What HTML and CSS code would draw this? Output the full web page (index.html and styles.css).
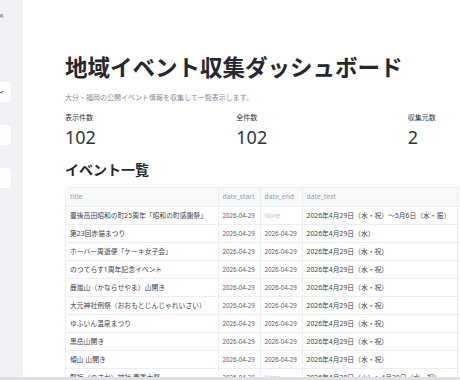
FILE: index.html
```html
<!DOCTYPE html>
<html lang="ja">
  <head>
    <meta charset="UTF-8" />
    <meta name="viewport" content="width=device-width, initial-scale=1.0" />
    <title>地域イベント収集ダッシュボード</title>
    <link rel="stylesheet" href="styles.css">
  </head>

  <body>
    <!-- sidebar, mostly scrolled out of view -->
    <aside class="sidebar">
      <div class="sidebar-inner">
        <div class="sidebar-top"><span class="close">×</span></div>
        <div class="select">
          <svg class="chevron" width="6" height="6" viewBox="0 0 6 6">
            <path d="M0.8 2 L3 4.2 L5.2 2" fill="none" stroke="#31333f" stroke-width="0.9" />
          </svg>
        </div>
        <div class="select"></div>
        <div class="select"></div>
      </div>
    </aside>

    <main class="main">
      <div class="block">
        <h1>地域イベント収集ダッシュボード</h1>
        <p class="caption">大分・福岡の公開イベント情報を収集して一覧表示します。</p>

        <div class="metrics">
          <div class="metric">
            <div class="metric-label">表示件数</div>
            <div class="metric-value">102</div>
          </div>
          <div class="metric">
            <div class="metric-label">全件数</div>
            <div class="metric-value">102</div>
          </div>
          <div class="metric">
            <div class="metric-label">収集元数</div>
            <div class="metric-value">2</div>
          </div>
        </div>

        <h3>イベント一覧</h3>

        <div class="grid">
          <table>
            <colgroup>
              <col class="c-title" />
              <col class="c-date" />
              <col class="c-date" />
              <col class="c-text" />
              <col />
            </colgroup>
            <thead>
              <tr>
                <th>title</th>
                <th>date_start</th>
                <th>date_end</th>
                <th>date_text</th>
                <th>place</th>
              </tr>
            </thead>
            <tbody>
              <tr>
                <td>豊後高田昭和の町25周年「昭和の町感謝祭」</td>
                <td class="date">2026-04-29</td>
                <td class="none">None</td>
                <td>2026年4月29日（水・祝）～5月6日（水・振）</td>
                <td></td>
              </tr>
              <tr>
                <td>第23回赤猫まつり</td>
                <td class="date">2026-04-29</td>
                <td class="date">2026-04-29</td>
                <td>2026年4月29日（水）</td>
                <td></td>
              </tr>
              <tr>
                <td>ホーバー周遊便「ケーキ女子会」</td>
                <td class="date">2026-04-29</td>
                <td class="date">2026-04-29</td>
                <td>2026年4月29日（水・祝）</td>
                <td></td>
              </tr>
              <tr>
                <td>のつてらす1周年記念イベント</td>
                <td class="date">2026-04-29</td>
                <td class="date">2026-04-29</td>
                <td>2026年4月29日（水・祝）</td>
                <td></td>
              </tr>
              <tr>
                <td>鹿嵐山（かならせやま）山開き</td>
                <td class="date">2026-04-29</td>
                <td class="date">2026-04-29</td>
                <td>2026年4月29日（水・祝）</td>
                <td></td>
              </tr>
              <tr>
                <td>大元神社例祭（おおもとじんじゃれいさい）</td>
                <td class="date">2026-04-29</td>
                <td class="date">2026-04-29</td>
                <td>2026年4月29日（水・祝）</td>
                <td></td>
              </tr>
              <tr>
                <td>ゆふいん温泉まつり</td>
                <td class="date">2026-04-29</td>
                <td class="date">2026-04-29</td>
                <td>2026年4月29日（水・祝）</td>
                <td></td>
              </tr>
              <tr>
                <td>黒岳山開き</td>
                <td class="date">2026-04-29</td>
                <td class="date">2026-04-29</td>
                <td>2026年4月29日（水・祝）</td>
                <td></td>
              </tr>
              <tr>
                <td>傾山 山開き</td>
                <td class="date">2026-04-29</td>
                <td class="date">2026-04-29</td>
                <td>2026年4月29日（水・祝）</td>
                <td></td>
              </tr>
              <tr>
                <td>野坂（のさか）神社 春季大祭</td>
                <td class="date">2026-04-28</td>
                <td class="none">None</td>
                <td>2026年4月28日（火）～4月29日（水・祝）</td>
                <td></td>
              </tr>
            </tbody>
          </table>
        </div>
      </div>
    </main>

    <div class="hscroll"></div>
  </body>
</html>
```

FILE: styles.css
```css
* {
  margin: 0;
  padding: 0;
  box-sizing: border-box;
}

body {
  width: 460px;
  height: 380px;
  overflow: hidden;
  display: flex;
  background-color: #ffffff;
  color: #31333f;
  font-family: "Noto Sans", "Noto Sans CJK JP", sans-serif;
}

/* sidebar */

.sidebar {
  width: 23px;
  flex-shrink: 0;
  background-color: #f0f2f6;
  overflow: hidden;
}

.sidebar-inner {
  width: 140px;
  margin-left: -129px;
  display: flex;
  flex-direction: column;
  gap: 23px;
}

.sidebar-top {
  height: 60px;
  display: flex;
  justify-content: flex-end;
  padding-top: 11px;
  margin-right: 7px;
  margin-bottom: -1px;
}

.close {
  font-size: 9px;
  line-height: 10px;
  color: #6b6e78;
}

.select {
  height: 20px;
  background-color: #ffffff;
  border-radius: 4px;
  display: flex;
  align-items: center;
  justify-content: flex-end;
  padding-right: 7px;
}

/* main */

.main {
  flex-shrink: 0;
  padding: 54px 0 0 42px;
}

.block {
  width: 506px;
  display: flex;
  flex-direction: column;
}

h1 {
  font-size: 22.5px;
  font-weight: 700;
  line-height: 27px;
  color: #262730;
}

.caption {
  margin-top: 12px;
  font-size: 7px;
  line-height: 10px;
  color: #8a8c96;
}

.metrics {
  margin-top: 10px;
  display: flex;
  gap: 8px;
}

.metric {
  flex: 1;
}

.metric-label {
  font-size: 7px;
  line-height: 10px;
  color: #31333f;
}

.metric-value {
  margin-top: 3px;
  font-size: 18px;
  line-height: 23px;
  color: #31333f;
}

h3 {
  margin-top: 11px;
  font-size: 14px;
  font-weight: 700;
  line-height: 20px;
  color: #262730;
}

/* data grid */

.grid {
  margin-top: 7px;
  border: 1px solid #eceef2;
  border-radius: 4px;
  overflow: hidden;
}

table {
  width: 100%;
  border-collapse: collapse;
  table-layout: fixed;
}

.c-title {
  width: 152px;
}

.c-date {
  width: 42px;
}

.c-text {
  width: 155px;
}

th,
td {
  height: 18px;
  padding: 0 4px;
  font-size: 6.8px;
  font-weight: 400;
  text-align: left;
  white-space: nowrap;
  overflow: hidden;
  border-right: 1px solid #eceef2;
  border-bottom: 1px solid #eceef2;
}

th {
  background-color: #f8f9fb;
  color: #9a9ca5;
}

td {
  color: #3f414c;
}

td.date {
  font-size: 6.2px;
  color: #5c5e68;
}

td.none {
  font-size: 6.2px;
  color: #c4c6cc;
}

.hscroll {
  position: fixed;
  left: 0;
  right: 0;
  bottom: 0;
  height: 3px;
  background-color: #dfe0e3;
}
```
